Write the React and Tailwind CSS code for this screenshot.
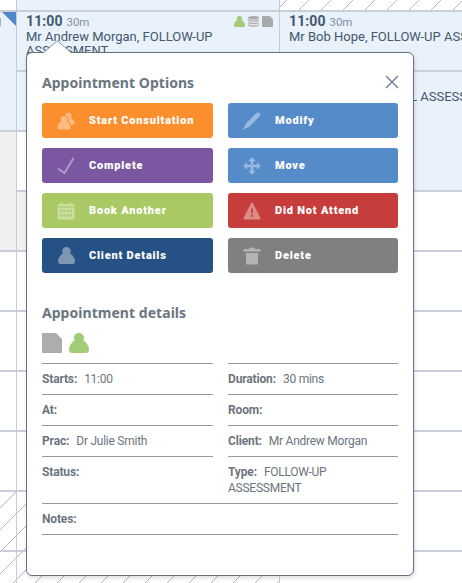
// App.jsx
import { X } from "lucide-react";

const HATCH_LEFT =
  "bg-[repeating-linear-gradient(135deg,transparent_0_10.8px,#b6b6bd_10.8px_11.8px,transparent_11.8px_15.56px)]";
const HATCH_MIDDLE =
  "bg-[repeating-linear-gradient(135deg,transparent_0_14.4px,#b6b6bd_14.4px_15.4px,transparent_15.4px_15.56px)]";
const HATCH_RIGHT =
  "bg-[repeating-linear-gradient(135deg,transparent_0_4.6px,#b6b6bd_4.6px_5.6px,transparent_5.6px_15.56px)]";

const App = () => {
  return (
    <div className="relative w-[462px] h-[583px] overflow-hidden bg-white font-['Roboto',sans-serif] text-[#43586c]">
      {/* Calendar */}
      <div className="flex h-full">
        <LeftColumn />
        <MiddleColumn />
        <RightColumn />
      </div>
      <AppointmentPopover />
    </div>
  );
};

// Calendar columns
const LeftColumn = () => (
  <div className="flex flex-col w-[17px] shrink-0 border-r border-[#c8ccda]">
    <Slot className="h-3" />
    <Slot className="h-[120px] bg-[#e9f1fb] relative">
      <span className="absolute left-0 top-[6px] w-px h-[8px] bg-[#b1b1b1]" />
      <svg className="absolute right-0 top-0" width="14" height="14" viewBox="0 0 14 14">
        <path d="M0 0h14v14z" fill="#5288cb" />
      </svg>
    </Slot>
    <Slot className="h-[120px] bg-[#f0f0f0]" />
    <Slot className="h-[60px]" />
    <Slot className="h-[60px]" />
    <Slot className="h-[60px]" />
    <Slot className="h-[60px]" />
    <div className={`flex-1 ${HATCH_LEFT}`}>
      <Slot className="h-[60px]" />
    </div>
  </div>
);

const MiddleColumn = () => (
  <div className="flex flex-col w-[263px] shrink-0 border-r border-[#c8ccda]">
    <Slot className="h-3 bg-[#e9f1fb]" />
    <Slot className="h-[60px] bg-[#e9f1fb] overflow-hidden pl-[9px] pr-[6px]">
      <div className="flex items-start justify-between">
        <SlotTime />
        <div className="flex items-center gap-[3px] pt-[4px]">
          <PersonIcon className="w-[11px] h-[11px] text-[#a3cc78]" />
          <svg width="11" height="11" viewBox="0 0 11 11" fill="#a9a9a9">
            <ellipse cx="5.5" cy="1.8" rx="5.5" ry="1.8" />
            <path d="M0 3.2q5.500 2.600 11 0v1.300q-5.500 2.600-11 0zM0 5.700q5.500 2.600 11 0v1.300q-5.500 2.600-11 0zM0 8.200q5.500 2.600 11 0v1.300q-5.500 2.600-11 0z" />
          </svg>
          <NoteIcon className="w-[11px] h-[11px] text-[#a9a9a9]" />
        </div>
      </div>
      <p className="w-[200px] text-[13px] leading-[14px] -mt-px">Mr Andrew Morgan, FOLLOW-UP ASSESSMENT</p>
    </Slot>
    <Slot className="h-[60px] bg-[#e9f1fb]" />
    <Slot className="h-[60px]" />
    <Slot className="h-[60px] bg-[#f0f0f0]" />
    <Slot className="h-[60px]" />
    <Slot className="h-[60px]" />
    <Slot className="h-[60px]" />
    <Slot className="h-[60px]" />
    <div className={`flex-1 ${HATCH_MIDDLE}`}>
      <Slot className="h-[60px]" />
    </div>
  </div>
);

const RightColumn = () => (
  <div className="flex flex-col w-[182px] shrink-0">
    <Slot className={`h-3 ${HATCH_RIGHT}`} />
    <Slot className="h-[60px] bg-[#e9f1fb] overflow-hidden pl-[9px]">
      <SlotTime />
      <p className="whitespace-nowrap text-[13px] leading-[14px] -mt-px">Mr Bob Hope, FOLLOW-UP ASSESSMENT</p>
    </Slot>
    <Slot className="h-[120px] bg-[#e9f1fb] overflow-hidden pl-[130px] pt-[18px]">
      <p className="whitespace-nowrap text-[13px] leading-[14px]">L ASSESSMENT</p>
    </Slot>
    <Slot className="h-[60px]" />
    <Slot className="h-[60px]" />
    <Slot className="h-[60px]" />
    <Slot className="h-[60px]" />
    <Slot className="h-[60px]" />
    <Slot className="h-[60px]" />
  </div>
);

const Slot = ({ className, children }) => (
  <div className={`shrink-0 border-b-2 border-[#c9cfd8] ${className}`}>{children}</div>
);

const SlotTime = () => (
  <div className="flex items-baseline gap-1 leading-[18px]">
    <span className="text-[14px] font-bold tracking-[0.1px]">11:00</span>
    <span className="text-[11.5px] tracking-[-0.1px] text-[#8090a3]">30m</span>
  </div>
);

// Popover
const AppointmentPopover = () => (
  <div className="absolute left-[26px] top-[52px] w-[388px] h-[524px] bg-white border border-[#66717e] rounded-[6px] shadow-[1px_2px_4px_rgba(80,90,110,0.2)] pl-[15px] pr-[15px]">
    <svg className="absolute left-[16px] -top-[13px]" width="30" height="14" viewBox="0 0 30 14">
      <path d="M0.500 14 1 12.500 14.500 0.800 28 12.500V14z" fill="#fff" />
      <path d="M0.500 12.500 14.500 0.800 28 12.500" fill="none" stroke="#8994a1" strokeWidth="1" />
    </svg>

    <div className="flex items-center justify-between h-[50px] pt-[9px]">
      <Heading>Appointment Options</Heading>
      <X size={22} strokeWidth={1.6} className="text-[#75849a] -mr-[5px] -mt-px" />
    </div>

    {/* Actions */}
    <div className="grid grid-cols-[171px_170px] gap-x-[15px] gap-y-[10px]">
      <ActionButton label="Start Consultation" icon={<PeopleIcon />} className="bg-[#fb8f2d]" />
      <ActionButton label="Modify" icon={<PencilIcon />} className="bg-[#568bca]" />
      <ActionButton label="Complete" icon={<TickIcon />} className="bg-[#7b57a2]" />
      <ActionButton label="Move" icon={<MoveIcon />} className="bg-[#568bca]" />
      <ActionButton label="Book Another" icon={<CalendarIcon />} className="bg-[#a8c964]" />
      <ActionButton label="Did Not Attend" icon={<WarningIcon />} className="bg-[#c63d3c]" />
      <ActionButton label="Client Details" icon={<PersonIcon className="w-[17px] h-[17px]" />} className="bg-[#265184]" />
      <ActionButton label="Delete" icon={<BinIcon />} className="bg-[#808080]" />
    </div>

    {/* Details */}
    <div className="mt-[30px]">
      <Heading>Appointment details</Heading>
    </div>
    <div className="flex gap-[7px] mt-[10px]">
      <NoteIcon className="w-5 h-5 text-[#adadad]" />
      <PersonIcon className="w-5 h-5 text-[#a3cc78]" />
    </div>
    <div className="grid grid-cols-[171px_170px] gap-x-[15px] mt-[10px]">
      <Detail label="Starts" value="11:00" />
      <Detail label="Duration" value="30 mins" />
      <Detail label="At" />
      <Detail label="Room" />
      <Detail label="Prac" value="Dr Julie Smith" />
      <Detail label="Client" value="Mr Andrew Morgan" />
      <Detail label="Status" />
      <Detail label="Type" value="FOLLOW-UP ASSESSMENT" />
    </div>
    <div className="border-b border-[#969a9f]">
      <Detail label="Notes" />
    </div>
  </div>
);

const Heading = ({ children }) => (
  <h2 className="font-['Noto_Sans',sans-serif] text-[14px] leading-5 font-bold tracking-[0.04px] text-[#6b7680]">{children}</h2>
);

const ActionButton = ({ label, icon, className }) => (
  <button className={`flex items-center h-[35px] pl-[15px] rounded-[3px] text-white ${className}`}>
    <span className="w-[18px] h-[18px] flex items-center justify-center opacity-40">{icon}</span>
    <span className="ml-[14px] pt-[2px] text-[11px] font-black tracking-[0.8px]">{label}</span>
  </button>
);

const Detail = ({ label, value }) => (
  <div className="border-t border-[#969a9f] pt-[7px] pb-[7px] pr-5 min-h-[31px] text-[12px] leading-4 tracking-[-0.25px] text-[#6c757e]">
    <span className="font-bold tracking-[-0.15px] mr-[7px]">{label}:</span>
    {value}
  </div>
);

// Icons
const PersonIcon = ({ className }) => (
  <svg className={className} viewBox="0 0 20 20" fill="currentColor">
    <path d="M10 0c3 0 5 2.200 5 5 0 1-.2 1.700-.6 2.500C17.700 9.500 20 13.500 20 16.800c0 2-1 3.200-3 3.200H3c-2 0-3-1.200-3-3.200C0 13.500 2.300 9.500 5.600 7.500 5.200 6.700 5 6 5 5c0-2.800 2-5 5-5z" />
  </svg>
);

const NoteIcon = ({ className }) => (
  <svg className={className} viewBox="0 0 20 20" fill="currentColor">
    <path d="M0 0h14l6 6v14H0z" />
  </svg>
);

const PeopleIcon = () => (
  <svg width="18" height="18" viewBox="0 0 18 18" fill="currentColor">
    <path d="M7 4c2.200 0 3.500 1.500 3.500 3.500 0 .8-.2 1.300-.5 1.900 2.600 1.300 3.500 3.600 3.500 6.100 0 1.500-.8 2-2 2h-9c-1.300 0-2-.7-2-2C.5 13 1.600 10.700 4 9.400c-.3-.6-.5-1.100-.5-1.900C3.500 5.500 4.800 4 7 4z" />
    <path d="M8.200 3.200C8.500 1.500 9.600.5 11.300.5c2 0 3.300 1.400 3.300 3.300 0 1-.3 1.700-.8 2.300 2.400 1 3.700 2.800 3.700 5 0 1.300-.6 1.900-1.700 1.900h-1.500c-.5-1.500-1.400-2.700-2.900-3.600C12 6.200 11 3.800 8.200 3.200z" />
  </svg>
);

const TickIcon = () => (
  <svg width="18" height="18" viewBox="0 0 18 18" fill="none" stroke="currentColor" strokeWidth="2">
    <path d="M1 11.500 7.500 16 16.500 1" />
  </svg>
);

const PencilIcon = () => (
  <svg width="18" height="18" viewBox="0 0 18 18" fill="currentColor">
    <path d="M12.200 2.200 13.700.8c1.700-1.300 4.600 1 3.200 3.200L6.500 14.500 1 17.500c-.5.2-.8-.2-.6-.7L3 11.500z" />
  </svg>
);

const MoveIcon = () => (
  <svg width="18" height="18" viewBox="0 0 18 18" fill="currentColor">
    <path d="M9 .5 12.300 4H10v4h4V5.700L17.500 9 14 12.300V10h-4v4h2.300L9 17.500 5.700 14H8v-4H4v2.300L.5 9 4 5.700V8h4V4H5.700z" stroke="currentColor" strokeWidth=".5" strokeLinejoin="round" />
  </svg>
);

const CalendarIcon = () => (
  <svg width="18" height="18" viewBox="0 0 18 18" fill="currentColor">
    <path d="M3.500.5h2V2h7V.5h2V2H16c1 0 1.500.5 1.500 1.500v1H.5v-1C.5 2.500 1 2 2 2h1.500z" />
    <path
      fillRule="evenodd"
      d="M.5 5.500h17V16c0 1-.5 1.500-1.500 1.500H2c-1 0-1.500-.5-1.500-1.500zM3 8v2h2V8zm3.300 0v2h2V8zm3.400 0v2h2V8zM13 8v2h2V8zM3 12.500v2h2v-2zm3.300 0v2h2v-2zm3.400 0v2h2v-2zm3.300 0v2h2v-2z"
    />
  </svg>
);

const WarningIcon = () => (
  <svg width="18" height="18" viewBox="0 0 18 18" fill="currentColor">
    <path
      fillRule="evenodd"
      d="M9 .5c.5 0 .8.300 1 .7l7.300 14.600c.5 1 0 1.700-1 1.700H1.700c-1 0-1.500-.7-1-1.700L8 1.200c.2-.4.5-.7 1-.7zM8 6.500l.3 5h1.400l.3-5zm0 6.200v2h2v-2z"
    />
  </svg>
);

const BinIcon = () => (
  <svg width="18" height="18" viewBox="0 0 18 18" fill="currentColor">
    <path d="M.5 2h5.200c.3-1 1.300-1.500 3.300-1.500s3 .5 3.300 1.500h5.200v2.500H.5zM3 6h12v11.500H3z" />
  </svg>
);

export default App;
